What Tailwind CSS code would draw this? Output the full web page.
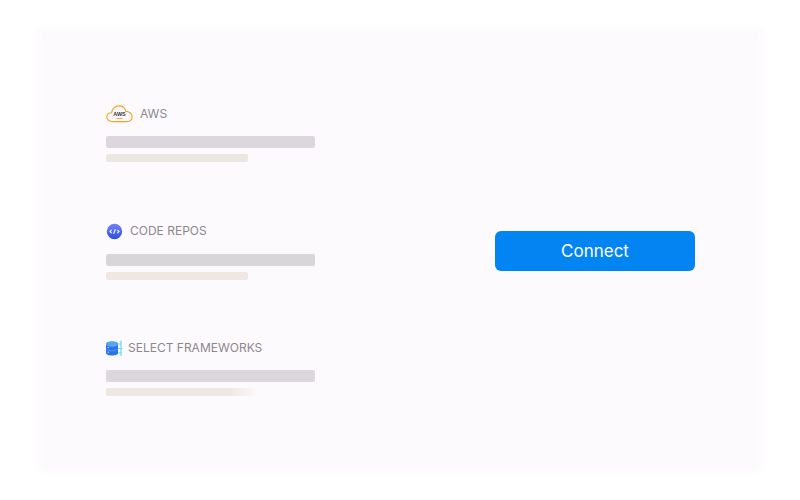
<!DOCTYPE html>
<html lang="en">
  <head>
    <meta charset="UTF-8" />
    <meta name="viewport" content="width=device-width, initial-scale=1.0" />
    <script src="https://cdn.jsdelivr.net/npm/@tailwindcss/browser@4"></script>
    <title>Connect</title>
  </head>
  <body class="bg-white font-['Inter',sans-serif]">
    <div class="w-[800px] h-[500px] pt-[32px] px-[42px] overflow-hidden">
      <main class="w-[716px] h-[436px] bg-[#fdfafd] shadow-[0_0_8px_4px_#fdfafd] pl-[64px] pr-[63px] flex items-center justify-between">
        <div class="w-[209px] flex flex-col pt-[3px]">
          <!-- AWS -->
          <section class="h-[117px]">
            <div class="h-[18px] flex items-center gap-[7px] mt-[-2px] mb-[13px]">
              <svg class="w-[27px] h-[18px]" viewBox="0 0 27 18" fill="none">
                <path d="M6.5 16.6C3 16.6 0.8 14.6 0.8 12C0.8 9.4 3 7.8 5.6 7.8C6 4 9 0.9 13 0.9C16.6 0.9 19 3.4 19.8 6.4C23.4 6.4 26.2 8.8 26.2 11.8C26.2 14.6 24 16.6 20.8 16.6Z" stroke="#f7a128" stroke-width="1.1" />
                <text x="13.5" y="10.6" text-anchor="middle" font-size="5.5" font-weight="700" fill="#33333b" font-family="Liberation Sans">AWS</text>
                <path d="M10.5 13.4H16.5" stroke="#f7a128" stroke-width="1" />
              </svg>
              <span class="text-[12px] leading-[18px] text-[#8c878f]">AWS</span>
            </div>
            <div class="h-[12px] rounded-[2px] bg-[#dcd7dc]"></div>
            <div class="w-[142px] h-[8px] mt-[6px] rounded-[2px] bg-[#ebe7e1]"></div>
          </section>
          <!-- Code repos -->
          <section class="h-[115px]">
            <div class="h-[18px] flex items-center gap-[7px] mt-[-2px] mb-[14px]">
              <svg class="w-[17px] h-[17px]" viewBox="0 0 17 17" fill="none">
                <defs>
                  <linearGradient id="repo" x1="0" y1="0" x2="0" y2="1">
                    <stop offset="0" stop-color="#7480f6" />
                    <stop offset="1" stop-color="#2a4fe8" />
                  </linearGradient>
                </defs>
                <circle cx="8.5" cy="8.5" r="7.7" fill="url(#repo)" />
                <path d="M5.6 6.8L4 8.5L5.6 10.2M11.4 6.8L13 8.5L11.4 10.2M9.4 6.2L7.6 10.8" stroke="white" stroke-width="1.1" />
              </svg>
              <span class="text-[12px] leading-[18px] text-[#8c878f]">CODE REPOS</span>
            </div>
            <div class="h-[12px] rounded-[2px] bg-[#d9d6da]"></div>
            <div class="w-[142px] h-[8px] mt-[6px] rounded-[2px] bg-[#eee7e2]"></div>
          </section>
          <!-- Frameworks -->
          <section>
            <div class="h-[18px] flex items-center gap-[5px] mb-[13px]">
              <svg class="w-[17px] h-[17px]" viewBox="0 0 17 17" fill="none">
                <path d="M11 4H15.5M11 8.5H16.5M11 13H15.5M15 0.5V16" stroke="#63dce0" stroke-width="1.2" />
                <path d="M0 4C0 2.4 2.6 1.5 6 1.5C9.4 1.5 12 2.4 12 4V13C12 14.6 9.4 15.5 6 15.5C2.6 15.5 0 14.6 0 13Z" fill="#2f74e6" />
                <ellipse cx="6" cy="4.2" rx="6" ry="2.7" fill="#55a6f7" />
                <path d="M0.3 9C1.5 10.2 3.5 10.7 6 10.7C8.5 10.7 10.5 10.2 11.7 9" stroke="#5b9cf3" stroke-width="0.8" />
                <path d="M1.5 7.6H3M1.5 12.2H3" stroke="#bcd6fb" stroke-width="1" />
              </svg>
              <span class="text-[12px] leading-[18px] text-[#8c878f]">SELECT FRAMEWORKS</span>
            </div>
            <div class="h-[12px] rounded-[2px] bg-[#dcd7dc]"></div>
            <div class="w-[152px] h-[8px] mt-[6px] rounded-[2px] bg-gradient-to-r from-[#efe8e2] from-[82%] to-[#fdfafd]"></div>
          </section>
        </div>
        <button class="w-[200px] h-[40px] mt-[2px] pt-[1px] rounded-[6px] bg-[#0285f2] text-white text-[17px]">Connect</button>
      </main>
    </div>
  </body>
</html>
